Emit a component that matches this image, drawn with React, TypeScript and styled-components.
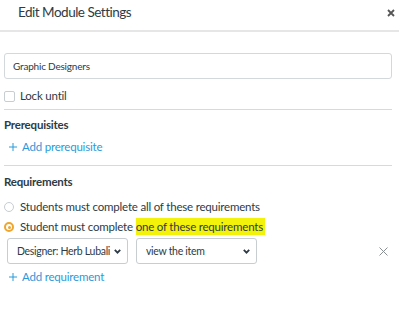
import { createGlobalStyle } from 'styled-components';
import styled from 'styled-components';

const Global = createGlobalStyle`
	body {
		margin: 0;
		background: #fff;
		font-family: Lato, 'Liberation Sans', sans-serif;
		color: #2d3b45;
	}
`;

const Dialog = styled.div`
	width: 399px;
	height: 310px;
	overflow: hidden;
`;

const Header = styled.div`
	display: flex;
	justify-content: space-between;
	align-items: flex-start;
	height: 32px;
	padding: 2px 4px 0 18px;
	box-sizing: border-box;
	border-bottom: 2px solid #e6e6e6;
`;

const Title = styled.h2`
	margin: 0;
	font-size: 13.5px;
	font-weight: 400;
	line-height: 20px;
	letter-spacing: -0.5px;
`;

const CloseButton = styled.button`
	margin-top: 7px;
	padding: 0;
	border: 0;
	background: none;
	display: flex;
`;

const Body = styled.div`
	padding: 0 7px 0 4px;
	font-size: 11.5px;
	line-height: 18px;
	letter-spacing: -0.2px;
`;

const TextInput = styled.input`
	display: block;
	width: 100%;
	height: 26px;
	margin-top: 21px;
	box-sizing: border-box;
	border: 1px solid #d3d8dc;
	border-radius: 3px;
	padding: 0 0 0 8px;
	font-family: inherit;
	font-size: 10px;
	letter-spacing: -0.2px;
	color: #2d3b45;
`;

const CheckRow = styled.label`
	display: flex;
	align-items: center;
	gap: 5px;
	height: 18px;
	margin-top: 8px;
`;

const Box = styled.span`
	width: 11px;
	height: 11px;
	box-sizing: border-box;
	border: 1px solid #c7cdd1;
	border-radius: 2px;
`;

const Divider = styled.hr<{ $gap: number }>`
	margin: ${(p) => p.$gap}px 0 0;
	border: 0;
	border-top: 1px solid #d9d9d9;
`;

const Heading = styled.h3<{ $gap: number }>`
	margin: ${(p) => p.$gap}px 0 0;
	font-size: 11.5px;
	font-weight: 700;
	line-height: 18px;
`;

const AddLink = styled.a<{ $gap: number }>`
	display: flex;
	align-items: center;
	gap: 5px;
	margin-top: ${(p) => p.$gap}px;
	padding-left: 5px;
	color: #2b9adb;
	text-decoration: none;
`;

const RadioRow = styled.label<{ $gap: number }>`
	display: flex;
	align-items: center;
	gap: 6px;
	height: 18px;
	margin-top: ${(p) => p.$gap}px;
	white-space: nowrap;
`;

const Radio = styled.span<{ $on?: boolean }>`
	width: 10px;
	height: 10px;
	flex: none;
	box-sizing: border-box;
	border-radius: 50%;
	border: ${(p) => (p.$on ? '2px solid #efa52e' : '1px solid #c7cdd1')};
	display: flex;
	align-items: center;
	justify-content: center;
	&::after {
		content: '';
		display: ${(p) => (p.$on ? 'block' : 'none')};
		width: 3px;
		height: 3px;
		border-radius: 50%;
		background: #efa52e;
	}
`;

const Highlight = styled.mark`
	background: #f3f20b;
	color: inherit;
	padding: 2px 2px 2px 0;
`;

const ReqRow = styled.div`
	display: flex;
	align-items: center;
	gap: 8px;
	margin-top: 2px;
	padding-left: 3px;
`;

const Select = styled.div`
	display: flex;
	align-items: center;
	justify-content: space-between;
	width: 121px;
	height: 26px;
	box-sizing: border-box;
	padding: 0 6px 0 9px;
	border: 1px solid #c7cdd1;
	border-radius: 3px;
	font-size: 10.5px;
	letter-spacing: -0.3px;
	overflow: hidden;

	span {
		white-space: nowrap;
		overflow: hidden;
		max-width: 93px;
	}
`;

const Remove = styled.button`
	margin-left: auto;
	margin-right: 4px;
	padding: 0;
	border: 0;
	background: none;
	display: flex;
`;

const Chevron = () => (
	<svg width='7' height='5' viewBox='0 0 7 5'>
		<path d='M0.8 0.8 L3.5 3.6 L6.2 0.8' fill='none' stroke='#2d3b45' strokeWidth='1.8' />
	</svg>
);

const Plus = () => (
	<svg width='8' height='8' viewBox='0 0 8 8'>
		<path d='M4 0 V8 M0 4 H8' stroke='#2b9adb' strokeWidth='1' />
	</svg>
);

export default function App() {
	return (
		<Dialog>
			<Global />
			<Header>
				<Title>Edit Module Settings</Title>
				<CloseButton>
					<svg width='8' height='8' viewBox='0 0 8 8'>
						<path d='M1 1 L7 7 M7 1 L1 7' stroke='#555' strokeWidth='1.8' />
					</svg>
				</CloseButton>
			</Header>
			<Body>
				<TextInput defaultValue='Graphic Designers' />
				<CheckRow>
					<Box />
					Lock until
				</CheckRow>
				<Divider $gap={4} />

				<Heading $gap={6}>Prerequisites</Heading>
				<AddLink $gap={4}>
					<Plus />
					Add prerequisite
				</AddLink>
				<Divider $gap={9} />

				<Heading $gap={7}>Requirements</Heading>
				<RadioRow $gap={7}>
					<Radio />
					Students must complete all of these requirements
				</RadioRow>
				<RadioRow $gap={2}>
					<Radio $on />
					<span>
						Student must complete <Highlight>one of these requirements</Highlight>
					</span>
				</RadioRow>
				<ReqRow>
					<Select>
						<span>Designer: Herb Lubalin</span>
						<Chevron />
					</Select>
					<Select>
						<span>view the item</span>
						<Chevron />
					</Select>
					<Remove>
						<svg width='9' height='9' viewBox='0 0 9 9'>
							<path d='M0.5 0.5 L8.5 8.5 M8.5 0.5 L0.5 8.5' stroke='#8a8f94' strokeWidth='1' />
						</svg>
					</Remove>
				</ReqRow>
				<AddLink $gap={4}>
					<Plus />
					Add requirement
				</AddLink>
			</Body>
		</Dialog>
	);
}
